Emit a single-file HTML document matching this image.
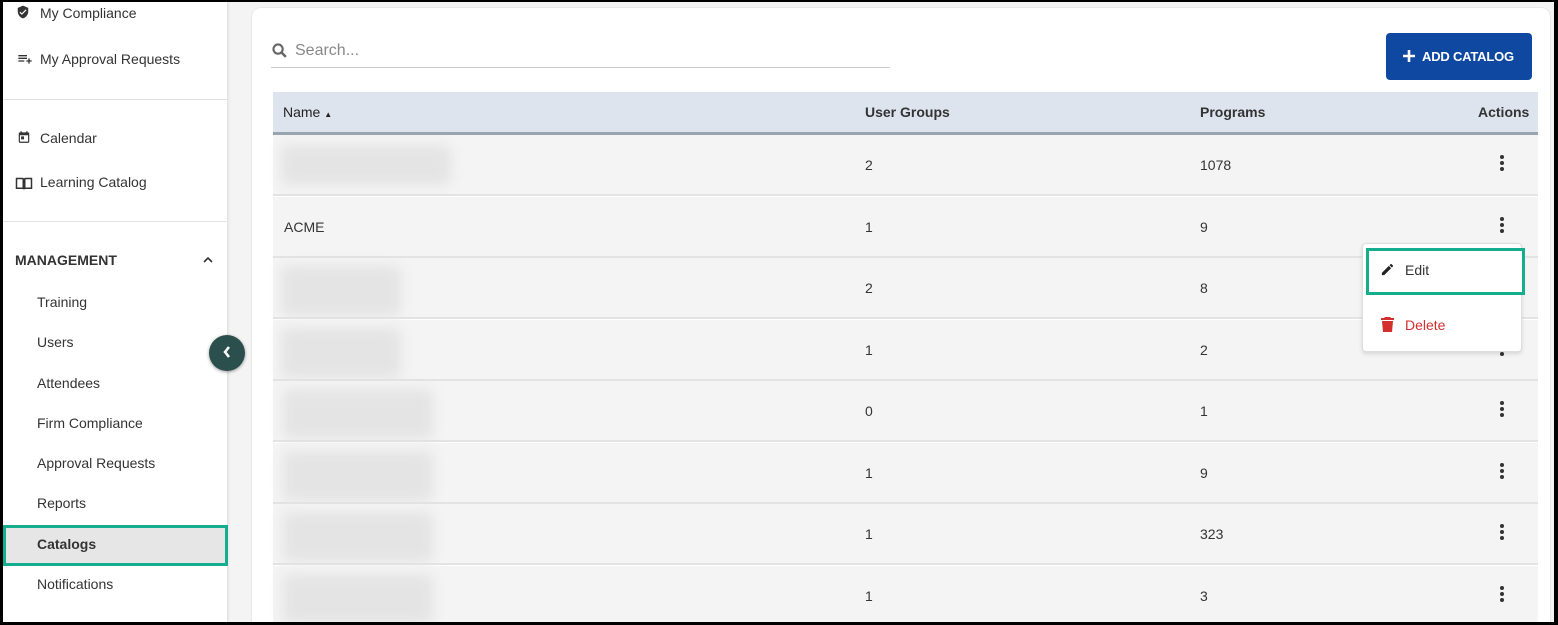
<!DOCTYPE html>
<html><head><style>
*{box-sizing:border-box;margin:0;padding:0}
body{width:1558px;height:625px;background:#000;font-family:"Liberation Sans",sans-serif;position:relative;overflow:hidden;color:#333}
.abs{position:absolute}
#main{left:3px;top:2px;width:1551px;height:620px;background:#f4f4f4;overflow:hidden}
#side{left:3px;top:2px;width:224px;height:620px;background:#fff;box-shadow:1px 0 3px rgba(0,0,0,.1)}
.si{position:absolute;font-size:14px;color:#333}
.sub{position:absolute;left:34px;font-size:14px;color:#333}
.hr{position:absolute;left:0;width:224px;height:1px;background:#e2e2e2}
#card{left:251px;top:7px;width:1300px;height:615px;background:#fff;border-radius:10px 10px 0 0;border:1px solid #e8e8e8;border-bottom:none}
#clip{left:0;top:0;width:1558px;height:622px;overflow:hidden}
.row{position:absolute;left:273px;width:1265px;height:61px;background:#f4f4f4;border-bottom:2px solid #e3e3e3;font-size:14px}
.row span{position:absolute;top:22px}
.blur{position:absolute;background:#e4e4e4;filter:blur(6px);border-radius:6px}
.dots{position:absolute;left:1227px;top:20px;width:4px}
.dots i{display:block;width:4px;height:4px;border-radius:50%;background:#333;margin-bottom:2px}
</style></head><body>
<div id="clip" class="abs">
<div id="main" class="abs"></div>
<div id="card" class="abs"></div>
<div id="side" class="abs">
 <svg class="abs" style="left:13px;top:2px" width="14" height="16" viewBox="0 0 24 24"><path fill="#333" d="M12 1L3 5v6c0 5.5 3.8 10.7 9 12 5.2-1.3 9-6.5 9-12V5l-9-4zm-2 16l-4-4 1.4-1.4 2.6 2.6 6.6-6.6L18 9l-8 8z"/></svg>
 <div class="si" style="left:37px;top:3px">My Compliance</div>
 <svg class="abs" style="left:13px;top:49px" width="18" height="16" viewBox="0 0 24 24"><path fill="#333" d="M2 6h13v2H2zm0 4h13v2H2zm0 4h9v2H2zm15 0v-3h2v3h3v2h-3v3h-2v-3h-3v-2z"/></svg>
 <div class="si" style="left:37px;top:49px">My Approval Requests</div>
 <div class="hr" style="top:97px"></div>
 <svg class="abs" style="left:14px;top:128px" width="14" height="14" viewBox="0 0 24 24"><path fill="#333" d="M19 4h-1V2h-2v2H8V2H6v2H5a2 2 0 0 0-2 2v14a2 2 0 0 0 2 2h14a2 2 0 0 0 2-2V6a2 2 0 0 0-2-2zm0 16H5V9h14zM7 11h5v5H7z"/></svg>
 <div class="si" style="left:37px;top:128px">Calendar</div>
 <svg class="abs" style="left:12px;top:174px" width="18" height="14" viewBox="0 0 24 18"><path fill="#333" d="M1 2h9c1 0 2 .5 2 1.5C12 2.5 13 2 14 2h9v15h-9c-1 0-2 .5-2 1-0-.5-1-1-2-1H1zm2 2v11h7V4zm11 0v11h7V4z"/></svg>
 <div class="si" style="left:37px;top:172px">Learning Catalog</div>
 <div class="hr" style="top:219px"></div>
 <div class="si" style="left:12px;top:250px;font-weight:bold;color:#333">MANAGEMENT</div>
 <svg class="abs" style="left:200px;top:254px" width="10" height="7" viewBox="0 0 10 7"><path d="M1 6l4-4 4 4" stroke="#333" stroke-width="1.6" fill="none"/></svg>
 <div class="sub" style="top:292px">Training</div>
 <div class="sub" style="top:332px">Users</div>
 <div class="sub" style="top:373px">Attendees</div>
 <div class="sub" style="top:413px">Firm Compliance</div>
 <div class="sub" style="top:453px">Approval Requests</div>
 <div class="sub" style="top:493px">Reports</div>
 <div class="abs" style="left:0;top:523px;width:225px;height:41px;background:#e6e6e6;border:3px solid #14ad8d"></div>
 <div class="sub" style="top:534px;font-weight:bold">Catalogs</div>
 <div class="sub" style="top:574px">Notifications</div>
</div>
<div class="abs" style="left:209px;top:335px;width:36px;height:36px;border-radius:50%;background:#2b4f4c;box-shadow:0 1px 3px rgba(0,0,0,.4)"></div>
<svg class="abs" style="left:222px;top:345px" width="10" height="14" viewBox="0 0 10 14"><path d="M7 2L3 7l4 5" stroke="#fff" stroke-width="2.6" fill="none"/></svg>
<svg class="abs" style="left:271px;top:42px" width="17" height="17" viewBox="0 0 24 24"><circle cx="10" cy="10" r="6.5" stroke="#666" stroke-width="3" fill="none"/><path d="M15 15l6 6" stroke="#666" stroke-width="3.5"/></svg>
<div class="abs" style="left:295px;top:42px;font-size:16px;color:#888">Search...</div>
<div class="abs" style="left:271px;top:67px;width:619px;height:1px;background:#ccc"></div>
<div class="abs" style="left:1386px;top:33px;width:146px;height:47px;background:#0f48a0;border-radius:4px;color:#fff;font-weight:bold;font-size:13px;line-height:47px;padding-left:36px;letter-spacing:-0.2px">ADD CATALOG</div>
<svg class="abs" style="left:1401px;top:48px" width="16" height="16" viewBox="0 0 16 16"><path d="M8 2v12M2 8h12" stroke="#fff" stroke-width="2.6"/></svg>
<div class="abs" style="left:273px;top:92px;width:1265px;height:43px;background:#dee4ee;border-bottom:3px solid #9aa3b0;font-size:14px;font-weight:bold;color:#333">
 <span class="abs" style="left:10px;top:12px;font-weight:normal;color:#222">Name <span style="font-size:8px">▲</span></span>
 <span class="abs" style="left:592px;top:12px">User Groups</span>
 <span class="abs" style="left:927px;top:12px">Programs</span>
 <span class="abs" style="left:1205px;top:12px">Actions</span>
</div>
<div class="row" style="top:135px"><div class="blur" style="left:8px;top:10px;width:170px;height:40px"></div><span style="left:592px">2</span><span style="left:927px">1078</span><div class="dots"><i></i><i></i><i></i></div></div>
<div class="row" style="top:197px"><span style="left:11px">ACME</span><span style="left:592px">1</span><span style="left:927px">9</span><div class="dots"><i></i><i></i><i></i></div></div>
<div class="row" style="top:258px"><div class="blur" style="left:8px;top:8px;width:120px;height:50px"></div><span style="left:592px">2</span><span style="left:927px">8</span></div>
<div class="row" style="top:320px"><div class="blur" style="left:8px;top:8px;width:120px;height:50px"></div><span style="left:592px">1</span><span style="left:927px">2</span><div class="dots"><i></i><i></i><i></i></div></div>
<div class="row" style="top:381px"><div class="blur" style="left:10px;top:8px;width:150px;height:50px"></div><span style="left:592px">0</span><span style="left:927px">1</span><div class="dots"><i></i><i></i><i></i></div></div>
<div class="row" style="top:443px"><div class="blur" style="left:10px;top:8px;width:150px;height:50px"></div><span style="left:592px">1</span><span style="left:927px">9</span><div class="dots"><i></i><i></i><i></i></div></div>
<div class="row" style="top:504px"><div class="blur" style="left:10px;top:8px;width:150px;height:50px"></div><span style="left:592px">1</span><span style="left:927px">323</span><div class="dots"><i></i><i></i><i></i></div></div>
<div class="row" style="top:566px"><div class="blur" style="left:10px;top:8px;width:150px;height:50px"></div><span style="left:592px">1</span><span style="left:927px">3</span><div class="dots"><i></i><i></i><i></i></div></div>
<div class="abs" style="left:1362px;top:243px;width:160px;height:109px;background:#fff;border:1px solid #ddd;border-radius:4px;box-shadow:0 2px 4px rgba(0,0,0,.12)"></div>
<div class="abs" style="left:1366px;top:248px;width:159px;height:47px;border:3px solid #14ad8d;background:#fff"></div>
<svg class="abs" style="left:1380px;top:262px" width="15" height="15" viewBox="0 0 24 24"><path fill="#222" d="M3 17.3V21h3.7L17.8 9.9l-3.7-3.7zM20.7 7a1 1 0 0 0 0-1.4l-2.3-2.3a1 1 0 0 0-1.4 0l-1.8 1.8 3.7 3.7z"/></svg>
<div class="abs" style="left:1405px;top:262px;font-size:14px;color:#333">Edit</div>
<svg class="abs" style="left:1381px;top:317px" width="13" height="15" viewBox="0 0 13 15"><path fill="#d32f2f" d="M4 0h5l1 1h3v2H0V1h3zM1 4h11l-1 11H2z"/></svg>
<div class="abs" style="left:1405px;top:317px;font-size:14px;color:#d32f2f">Delete</div>
</div>
</body></html>
